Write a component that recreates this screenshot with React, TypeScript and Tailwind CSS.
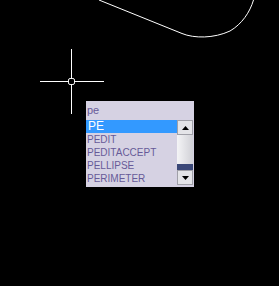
const items = ['PE', 'PEDIT', 'PEDITACCEPT', 'PELLIPSE', 'PERIMETER'];

const Canvas = () => (
  <svg className="absolute left-0 top-0" width="279" height="286" viewBox="0 0 279 286">
    <g stroke="#ffffff" strokeWidth="1" fill="none" shapeRendering="crispEdges">
      <path d="M99,0 L182,33.5 C194,38.5 214,38.5 230,31 C242,24 250,12 253.5,0" shapeRendering="auto" />
      <line x1="40" y1="81.5" x2="68" y2="81.5" />
      <line x1="75" y1="81.5" x2="104" y2="81.5" />
      <line x1="71.5" y1="49" x2="71.5" y2="78" />
      <line x1="71.5" y1="85" x2="71.5" y2="114" />
    </g>
    <rect x="68.5" y="78.5" width="6" height="6" rx="1.6" stroke="#ffffff" strokeWidth="1" fill="#000000" />
  </svg>
);

const Arrow = ({ down }: { down?: boolean }) => (
  <svg width="7" height="4" viewBox="0 0 7 4">
    <polygon points={down ? '0,0 7,0 3.5,4' : '3.5,0 7,4 0,4'} fill="#000000" />
  </svg>
);

const Popup = () => (
  <div className="absolute left-[86px] top-[101px] w-[108px] bg-[#d6d2e3] pb-[2px] font-['Liberation_Sans',sans-serif] text-[10px] leading-[13px] text-[#675a98]">
    <div className="h-[19px] pl-[1px] pt-[3px] text-[11px]">pe</div>
    <div className="flex">
      <div className="flex w-[91px] flex-col">
        {items.map((item, i) => (
          <div
            key={item}
            className={i === 0 ? 'h-[13px] bg-[#3399ff] pl-[2px] text-[12px] text-white' : 'h-[13px] pl-[1px]'}
          >
            {item}
          </div>
        ))}
      </div>
      <div className="flex h-[65px] w-[16px] flex-col">
        <div className="flex h-[15px] items-center justify-center border border-[#a0a0a8] bg-[#e4e4e8]">
          <Arrow />
        </div>
        <div className="h-[29px] bg-gradient-to-r from-[#f4f4f6] to-[#d0d0d6]" />
        <div className="h-[6px] bg-[#3b4878]" />
        <div className="flex h-[15px] items-center justify-center border border-[#a0a0a8] bg-[#e4e4e8]">
          <Arrow down />
        </div>
      </div>
    </div>
  </div>
);

export default function App() {
  return (
    <div className="relative h-[286px] w-[279px] overflow-hidden bg-black">
      <Canvas />
      <Popup />
    </div>
  );
}
